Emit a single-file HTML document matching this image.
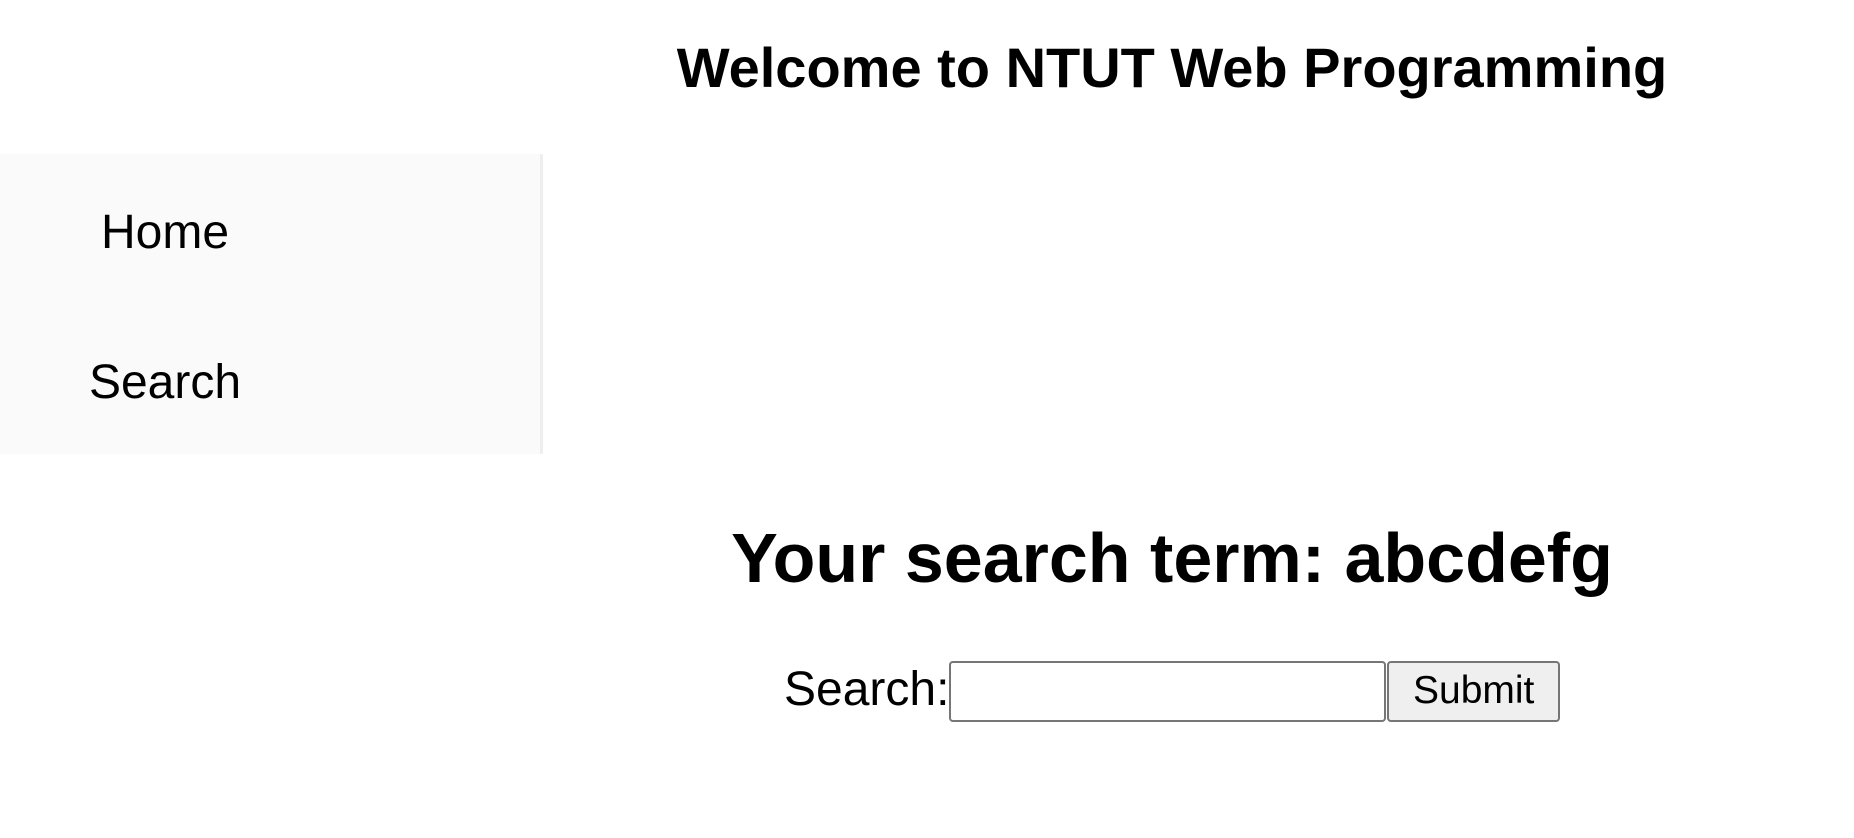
<!DOCTYPE html>
<html><head><meta charset="utf-8">
<style>
html,body{margin:0;padding:0;background:#fff;width:1854px;height:838px;overflow:hidden;font-family:"Liberation Sans",Arial,sans-serif;color:#000}
.a{position:absolute;white-space:nowrap;line-height:1}
#side{position:absolute;left:0;top:154px;width:540px;height:300px;background:#fafafa;border-right:3px solid #eeeeee}
.c{transform:translateX(-50%)}
#inp{position:absolute;left:949px;top:661px;width:437px;height:61px;box-sizing:border-box;border:2px solid #767676;border-radius:4px;background:#fff}
#btn{position:absolute;left:1387px;top:661px;width:173px;height:61px;box-sizing:border-box;border:2px solid #767676;border-radius:4px;background:#efefef}
</style></head><body>
<div class="a c" style="left:1172px;top:40px;font-size:56px;font-weight:bold">Welcome to NTUT Web Programming</div>
<div id="side"></div>
<div class="a c" style="left:165px;top:209px;font-size:48px">Home</div>
<div class="a c" style="left:165px;top:359px;font-size:48px">Search</div>
<div class="a c" style="left:1172px;top:523px;font-size:70px;font-weight:bold">Your search term: abcdefg</div>
<div class="a" style="left:784px;top:666px;font-size:48px">Search:</div>
<div id="inp"></div>
<div id="btn"></div>
<div class="a" style="left:1413px;top:671px;font-size:39px">Submit</div>
</body></html>
